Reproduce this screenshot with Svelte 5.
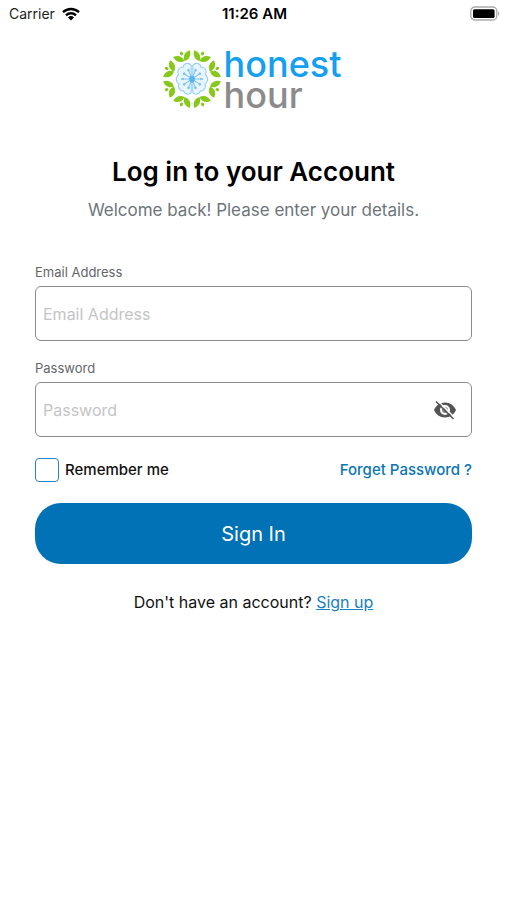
<script lang="ts">
  let email = $state('');
  let password = $state('');
  let showPassword = $state(false);
  let remember = $state(false);

  const sprigs = [0, 1, 2, 3, 4, 5, 6, 7].map((i) => 22.5 + i * 45);
  const spokes = [22, 56, 90, 124, 158, 202, 236, 270, 304, 338];
</script>

<div class="screen">
  <!-- Status bar -->
  <div class="status-bar">
    <div class="carrier">
      <span>Carrier</span>
      <svg width="18" height="14" viewBox="0 0 18 14" fill="none" stroke="#000" stroke-width="2.4">
        <path d="M1 5.2a11.6 11.6 0 0 1 16 0" />
        <path d="M4 8.3a7.3 7.3 0 0 1 10 0" />
        <path d="M9 13.6 6 10.5a4.3 4.3 0 0 1 6 0z" fill="#000" stroke="none" />
      </svg>
    </div>
    <span class="clock">11:26 AM</span>
    <div class="battery">
      <svg width="30" height="16" viewBox="0 0 30 16">
        <rect x="0.8" y="1" width="26" height="13" rx="4" fill="#fff" stroke="#aaa" stroke-width="1.3" />
        <rect x="3" y="3.2" width="21.6" height="8.8" rx="1.6" fill="#000" />
        <path d="M28.2 5.2v4.6c1.5-.6 1.5-4 0-4.6z" fill="#aaa" />
      </svg>
    </div>
  </div>

  <!-- Logo -->
  <div class="logo">
    <svg width="60" height="60" viewBox="-30 -30 60 60">
      {#each sprigs as angle}
        <g transform="rotate({angle}) translate(0 -20.5)" fill="#86c81c">
          <path d="M0 1C-5 1.500-8.500-1.500-9-7-4-7.500 0-4.500 0 1z" />
          <path d="M0 1C5 1.500 8.500-1.500 9-7 4-7.500 0-4.500 0 1z" />
          <ellipse cx="0" cy="-7" rx="1.500" ry="1.900" />
        </g>
      {/each}
      <g fill="#e9f5fd" stroke="#96cef3" stroke-width="1.100">
        <path d="M-.8-13.500C-3-17-8.500-16-9-12-13-12-15.500-8-13.500-4.500-16.500-2-16.500 3-13 5-14.500 9-11.500 12.500-8.500 12-7 16-2.500 16-.8 13.500z" />
        <path d="M.8-13.500C3-17 8.500-16 9-12 13-12 15.500-8 13.500-4.500 16.500-2 16.500 3 13 5 14.500 9 11.500 12.500 8.500 12 7 16 2.500 16 .8 13.500z" />
      </g>
      {#each spokes as angle}
        <g transform="rotate({angle})">
          <path d="M0-2v-7" stroke="#7cc3f1" stroke-width="1" />
          <circle cx="0" cy="-9.500" r="1.300" fill="#7cc3f1" />
        </g>
      {/each}
      <ellipse rx="2.800" ry="3.600" fill="#5bb5f0" />
    </svg>
    <div class="wordmark">
      <span class="honest">honest</span>
      <span class="hour">hour</span>
    </div>
  </div>

  <h1>Log in to your Account</h1>
  <p class="subtitle">Welcome back! Please enter your details.</p>

  <form onsubmit={(e) => e.preventDefault()}>
    <label class="field-label" for="email">Email Address</label>
    <div class="field">
      <input id="email" type="email" placeholder="Email Address" bind:value={email} />
    </div>

    <label class="field-label" for="password">Password</label>
    <div class="field">
      <input
        id="password"
        type={showPassword ? 'text' : 'password'}
        placeholder="Password"
        bind:value={password}
      />
      <button
        type="button"
        class="toggle"
        aria-label="Show password"
        onclick={() => (showPassword = !showPassword)}
      >
        <svg width="24" height="24" viewBox="0 0 24 24">
          <path
            fill="#555"
            fill-rule="evenodd"
            d="M12 4.500C7 4.500 2.700 7.600 1 12c1.700 4.400 6 7.500 11 7.500s9.300-3.100 11-7.500c-1.700-4.400-6-7.500-11-7.500zM12 7a5 5 0 1 1 0 10 5 5 0 0 1 0-10z"
          />
          <circle cx="12" cy="12" r="3" fill="#888" />
          <path d="M4.500 2.500 22 20" stroke="#fff" stroke-width="1.600" />
          <path d="M3 3.500 20.500 21" stroke="#555" stroke-width="1.600" />
        </svg>
      </button>
    </div>

    <div class="options">
      <label class="remember">
        <input type="checkbox" bind:checked={remember} />
        <span>Remember me</span>
      </label>
      <a class="forgot" href="#forgot">Forget Password ?</a>
    </div>

    <button type="submit" class="sign-in">Sign In</button>
  </form>

  <p class="sign-up">Don't have an account? <a href="#signup">Sign up</a></p>
</div>

<style>
  :global(body) {
    background: #fff;
  }

  .screen {
    font-family: Inter, 'Liberation Sans', sans-serif;
    color: #000;
  }

  .status-bar {
    display: grid;
    grid-template-columns: 1fr auto 1fr;
    align-items: center;
    height: 27px;
    padding: 0 7px 0 9px;
    font-size: 14px;
  }

  .carrier {
    display: flex;
    align-items: center;
    gap: 7px;
    color: #222;
  }

  .clock {
    font-size: 15px;
    font-weight: 600;
  }

  .battery {
    display: flex;
    justify-content: flex-end;
  }

  .logo {
    display: flex;
    justify-content: center;
    align-items: center;
    gap: 2px;
    margin-top: 20px;
    padding-right: 4px;
  }

  .wordmark {
    display: flex;
    flex-direction: column;
    padding-top: 2px;
    font-size: 36px;
    font-weight: 500;
    line-height: 31px;
  }

  .honest {
    color: #149ff0;
  }

  .hour {
    color: #8b8b8b;
  }

  h1 {
    margin: 43px 0 0;
    font-size: 26px;
    font-weight: 600;
    line-height: 36px;
    text-align: center;
  }

  .subtitle {
    margin: 8px 0 0;
    font-size: 17px;
    line-height: 24px;
    text-align: center;
    color: #6c757a;
  }

  form {
    padding: 0 35px;
    margin-top: 40px;
  }

  .field-label {
    display: block;
    font-size: 13px;
    line-height: 20px;
    color: #62666a;
  }

  .field {
    display: flex;
    align-items: center;
    height: 53px;
    margin: 4px 0 17px;
    border: 1px solid #8c8c8c;
    border-radius: 6px;
  }

  .field input {
    flex: 1;
    min-width: 0;
    height: 100%;
    padding: 0 7px;
    border: none;
    outline: none;
    background: transparent;
    font: inherit;
    font-size: 16px;
  }

  .field input::placeholder {
    color: #c4c4c6;
  }

  .toggle {
    display: flex;
    padding: 0;
    margin-right: 14px;
    border: none;
    background: none;
    cursor: pointer;
  }

  .options {
    display: flex;
    justify-content: space-between;
    align-items: center;
    margin-top: 21px;
    font-size: 15px;
    line-height: 24px;
  }

  .remember {
    display: flex;
    align-items: center;
    gap: 6px;
    font-weight: 500;
    color: #111;
  }

  .remember input {
    appearance: none;
    width: 24px;
    height: 24px;
    margin: 0;
    border: 1px solid #2a83bd;
    border-radius: 4px;
  }

  .remember input:checked {
    background: #0072b5;
  }

  .forgot {
    font-weight: 500;
    color: #0a76b4;
    text-decoration: none;
  }

  .sign-in {
    display: block;
    width: 100%;
    height: 61px;
    margin-top: 21px;
    border: none;
    border-radius: 26px;
    background: #0072b5;
    color: #fff;
    font: inherit;
    font-size: 20px;
    cursor: pointer;
  }

  .sign-up {
    margin: 26px 0 0;
    font-size: 16px;
    line-height: 24px;
    text-align: center;
    color: #111;
  }

  .sign-up a {
    color: #1a80c0;
  }
</style>
